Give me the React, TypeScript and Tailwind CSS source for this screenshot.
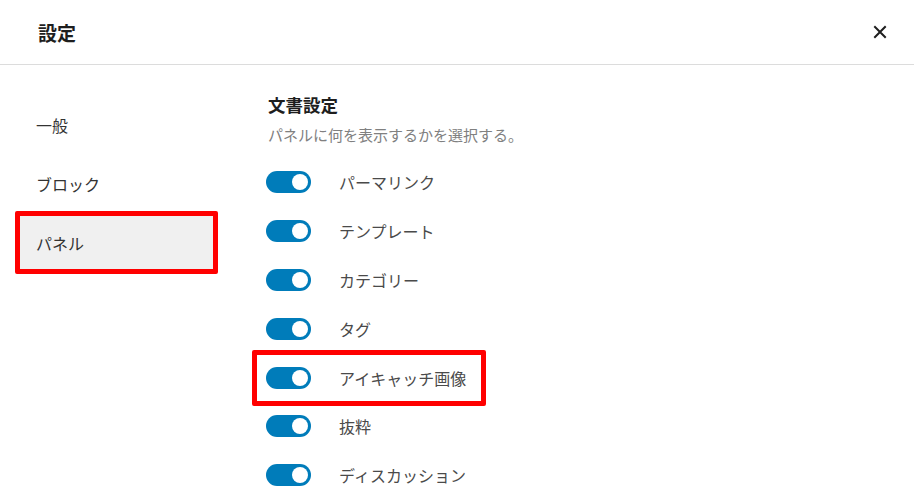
const navItems = [
    { label: "一般", active: false },
    { label: "ブロック", active: false },
    { label: "パネル", active: true },
];

const panels = [
    { label: "パーマリンク", marked: false },
    { label: "テンプレート", marked: false },
    { label: "カテゴリー", marked: false },
    { label: "タグ", marked: false },
    { label: "アイキャッチ画像", marked: true },
    { label: "抜粋", marked: false },
    { label: "ディスカッション", marked: false },
];

function Toggle() {
    return (
        <span className="flex h-[22px] w-[45px] shrink-0 items-center justify-end rounded-full bg-[#007cba] pr-[3px]">
            <span className="h-[16px] w-[16px] rounded-full bg-white" />
        </span>
    );
}

export default function App() {
    return (
        <div
            className="h-[500px] w-[914px] overflow-hidden bg-white text-[#1e1e1e]"
            style={{ fontFamily: '"Noto Sans CJK JP", "Noto Sans", sans-serif' }}
        >
            {/* header */}
            <div className="flex h-[65px] items-center justify-between border-b border-[#dcdcdc] pl-[38px] pr-[27px]">
                <h1 className="text-[19px] font-bold leading-none">設定</h1>
                <svg width="14" height="14" viewBox="0 0 14 14" className="text-[#1e1e1e]">
                    <path
                        d="M2 2 L12 12 M12 2 L2 12"
                        stroke="currentColor"
                        strokeWidth="2"
                        strokeLinecap="square"
                    />
                </svg>
            </div>

            <div className="flex">
                {/* side nav */}
                <nav className="flex w-[266px] shrink-0 flex-col gap-[6px] pl-[20px] pt-[33px]">
                    {navItems.map((item) => (
                        <div
                            key={item.label}
                            className={
                                item.active
                                    ? "relative flex h-[53px] w-[193px] items-center bg-[#f0f0f0] pl-[16px] text-[16px] text-[#333]"
                                    : "relative flex h-[53px] w-[193px] items-center pl-[16px] text-[16px] text-[#333]"
                            }
                        >
                            {item.label}
                            {item.active && (
                                <span className="pointer-events-none absolute -inset-[5px] rounded-[2px] border-[5px] border-[#f00]" />
                            )}
                        </div>
                    ))}
                </nav>

                {/* panel options */}
                <section className="flex-1 pt-[28px]">
                    <h2 className="ml-[2px] text-[17.5px] font-bold leading-[24px]">文書設定</h2>
                    <p className="ml-[2px] mt-[8px] text-[15px] leading-[20px] text-[#808080]">
                        パネルに何を表示するかを選択する。
                    </p>
                    <ul className="mt-[13px]">
                        {panels.map((p) => (
                            <li key={p.label} className="relative flex h-[48.8px] items-center gap-[28px]">
                                <Toggle />
                                <span className="text-[16px] text-[#4a4a4a]">{p.label}</span>
                                {p.marked && (
                                    <span className="pointer-events-none absolute left-[-14px] top-[-3px] h-[56px] w-[234px] rounded-[2px] border-[5px] border-[#f00]" />
                                )}
                            </li>
                        ))}
                    </ul>
                </section>
            </div>
        </div>
    );
}
